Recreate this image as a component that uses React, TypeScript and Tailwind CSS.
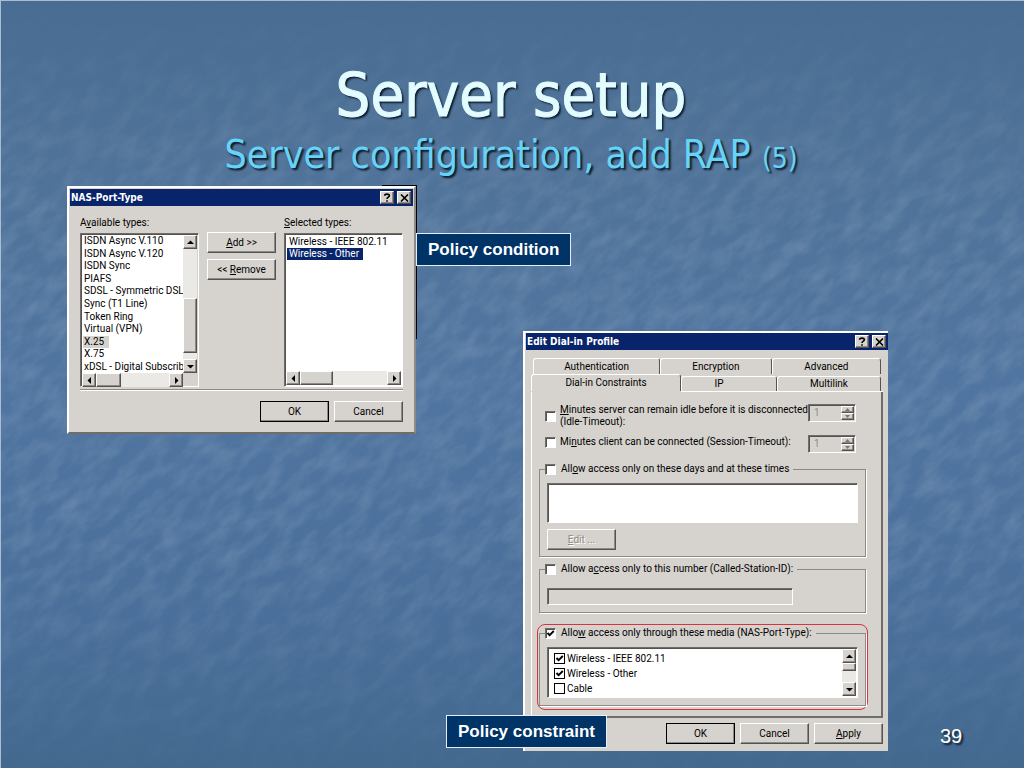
import { useId, type ReactNode } from "react";

const raised =
  "border border-t-white border-l-white border-r-[#55534f] border-b-[#55534f] bg-[#d6d3ce] shadow-[inset_-1px_-1px_0_#8c8a86]";
const sunken =
  "border border-t-[#6f6d69] border-l-[#6f6d69] border-r-white border-b-white shadow-[inset_1px_1px_0_#55534f]";
const track = "bg-[#ebe9e5]";

function Key({ children }: { children: ReactNode }) {
  return <span className="underline underline-offset-1">{children}</span>;
}

function Arrow({ dir }: { dir: "up" | "down" | "left" | "right" }) {
  const points = {
    up: "1,6 4.5,2.5 8,6",
    down: "1,3 4.5,6.5 8,3",
    left: "6,1 2.5,4.5 6,8",
    right: "3,1 6.5,4.5 3,8",
  }[dir];
  return (
    <svg viewBox="0 0 9 9" className="size-[9px]" aria-hidden="true">
      <polygon points={points} fill="#000" />
    </svg>
  );
}

function ScrollButton({ dir }: { dir: "up" | "down" | "left" | "right" }) {
  return (
    <button
      type="button"
      aria-label={"Scroll " + dir}
      className={raised + " flex size-[14px] shrink-0 items-center justify-center"}
    >
      <Arrow dir={dir} />
    </button>
  );
}

function TitleBar({ title }: { title: string }) {
  return (
    <header className="flex h-[17px] items-center gap-[3px] bg-[#08246b] pr-0.5 pl-px">
      <h2 className="flex-1 font-['DejaVu_Sans_Condensed','DejaVu_Sans',sans-serif] text-[10px] leading-4 font-bold whitespace-nowrap text-white">
        {title}
      </h2>
      <button
        type="button"
        aria-label="Help"
        className={raised + " flex h-[13px] w-[14px] items-center justify-center"}
      >
        <svg viewBox="0 0 8 9" className="h-[9px] w-2" aria-hidden="true">
          <path d="M1.6 2.8C1.6 .6 6.4.6 6.4 2.7 6.4 4.2 4 4.1 4 6M4 7.2V8.8" fill="none" stroke="#000" strokeWidth="1.6" />
        </svg>
      </button>
      <button
        type="button"
        aria-label="Close"
        className={raised + " flex h-[13px] w-[14px] items-center justify-center"}
      >
        <svg viewBox="0 0 9 8" className="h-2 w-[9px]" aria-hidden="true">
          <path d="M1 .5 8 7.5M8 .5 1 7.5" stroke="#000" strokeWidth="1.6" />
        </svg>
      </button>
    </header>
  );
}

function PushButton({
  children,
  primary = false,
  disabled = false,
}: {
  children: ReactNode;
  primary?: boolean;
  disabled?: boolean;
}) {
  return (
    <button
      type="button"
      disabled={disabled}
      className={
        raised +
        " h-[21px] w-[69px] whitespace-nowrap" +
        (primary ? " outline -outline-offset-1 outline-black" : "") +
        (disabled ? " text-[#8c8a86] [text-shadow:1px_1px_0_#fff]" : "")
      }
    >
      {children}
    </button>
  );
}

function Check({
  id,
  checked = false,
  flat = false,
}: {
  id: string;
  checked?: boolean;
  flat?: boolean;
}) {
  return (
    <span className="relative size-[11px] shrink-0">
      <input
        id={id}
        type="checkbox"
        defaultChecked={checked}
        className={
          "peer block size-[11px] appearance-none bg-white " +
          (flat ? "border border-black" : sunken)
        }
      />
      <svg
        viewBox="0 0 11 11"
        className="pointer-events-none absolute inset-0 hidden size-[11px] peer-checked:block"
        aria-hidden="true"
      >
        <path d="M2.5 5 4.6 7.2 8.8 3" fill="none" stroke="#000" strokeWidth="1.9" />
      </svg>
    </span>
  );
}

function Spinner({ label }: { label: string }) {
  return (
    <div className={sunken + " flex h-[18px] w-12 shrink-0 p-px"}>
      <input
        aria-label={label}
        defaultValue="1"
        disabled
        className="w-full min-w-0 flex-1 pl-1 text-[#8c8a86]"
      />
      <div className="flex w-[13px] shrink-0 flex-col">
        <button type="button" disabled aria-label="Increase" className={raised + " flex h-[7px] items-center justify-center overflow-hidden"}>
          <svg viewBox="0 0 5 3" className="h-[3px] w-[5px]" aria-hidden="true">
            <path d="M0 3 2.5 0 5 3z" fill="#777" />
          </svg>
        </button>
        <button type="button" disabled aria-label="Decrease" className={raised + " flex h-[7px] items-center justify-center overflow-hidden"}>
          <svg viewBox="0 0 5 3" className="h-[3px] w-[5px]" aria-hidden="true">
            <path d="M0 0 2.5 3 5 0z" fill="#777" />
          </svg>
        </button>
      </div>
    </div>
  );
}

function Group({
  legend,
  checked,
  className,
  children,
}: {
  legend: ReactNode;
  checked?: boolean;
  className: string;
  children: ReactNode;
}) {
  const id = useId();
  return (
    <fieldset
      className={"min-w-0 border border-[#8c8a86] px-[7px] shadow-[1px_1px_0_#fff] " + className}
    >
      <legend className="-ml-0.5 flex h-3 items-center gap-[5px] bg-[#d6d3ce] pr-1">
        <Check id={id} checked={checked} />
        <label htmlFor={id} className="whitespace-nowrap">
          {legend}
        </label>
      </legend>
      {children}
    </fieldset>
  );
}

const available = [
  "ISDN Async V.110",
  "ISDN Async V.120",
  "ISDN Sync",
  "PIAFS",
  "SDSL - Symmetric DSL",
  "Sync (T1 Line)",
  "Token Ring",
  "Virtual (VPN)",
  "X.25",
  "X.75",
  "xDSL - Digital Subscrib",
];

function PortTypeDialog() {
  return (
    <section
      aria-label="NAS-Port-Type"
      className="absolute top-[186px] left-[67px] w-[349px] border-2 border-t-white border-r-[#8c8a86] border-b-[#6f6d69] border-l-white bg-[#d6d3ce] p-px pb-[10px]"
    >
      <TitleBar title="NAS-Port-Type" />
      <div className="px-[10px] pt-[10px]">
        <div className="flex justify-between">
          <div className="w-[119px]">
            <p className="h-[17px] leading-[14px]">
              A<Key>v</Key>ailable types:
            </p>
            <div className={sunken + " h-[154px] bg-[#d6d3ce] p-px"}>
              <div className="flex h-[138px]">
                <div className="min-w-0 flex-1 bg-white">
                  <ul role="listbox" aria-label="Available types" className="grid h-[138px] auto-rows-fr pl-px">
                    {available.map((name) => (
                      <li key={name} role="option" aria-selected={name === "X.25"} className="flex items-center whitespace-nowrap">
                        <span className={name === "X.25" ? "bg-[#d6d3ce] pr-[5px] pl-px leading-3" : "pl-px leading-3"}>{name}</span>
                      </li>
                    ))}
                  </ul>
                </div>
                <div className={track + " flex w-[14px] flex-col"}>
                  <ScrollButton dir="up" />
                  <div className="flex-1" />
                  <div className={raised + " mb-[6px] h-[55px]"} />
                  <ScrollButton dir="down" />
                </div>
              </div>
              <div className="flex h-[14px] pr-[14px]">
                <div className={track + " flex flex-1"}>
                  <ScrollButton dir="left" />
                  <div className={raised + " w-[25px]"} />
                  <div className="flex-1" />
                  <ScrollButton dir="right" />
                </div>
              </div>
            </div>
          </div>
          <div className="flex flex-col gap-[6px] pt-4">
            <PushButton>
              <Key>A</Key>dd &gt;&gt;
            </PushButton>
            <PushButton>
              &lt;&lt; <Key>R</Key>emove
            </PushButton>
          </div>
          <div className="w-[119px]">
            <p className="h-[17px] leading-[14px]">
              <Key>S</Key>elected types:
            </p>
            <div className={sunken + " flex h-[154px] flex-col justify-between bg-white p-px"}>
              <ul role="listbox" aria-label="Selected types" className="pl-px leading-[13px]">
                <li role="option" aria-selected="false" className="pl-0.5">
                  Wireless - IEEE 802.11
                </li>
                <li role="option" aria-selected="true" className="flex">
                  <span className="bg-[#08246b] pr-1 pl-0.5 leading-3 text-white">Wireless - Other</span>
                </li>
              </ul>
              <div className={track + " flex h-[14px]"}>
                <ScrollButton dir="left" />
                <div className={raised + " w-[33px]"} />
                <div className="flex-1" />
                <ScrollButton dir="right" />
              </div>
            </div>
          </div>
        </div>
        <div className="mt-0.5 h-0.5 border-t border-b border-t-[#8c8a86] border-b-white" />
        <div className="mt-[10px] flex justify-end gap-[5px]">
          <PushButton primary>OK</PushButton>
          <PushButton>Cancel</PushButton>
        </div>
      </div>
    </section>
  );
}

function Tab({ children, className, active = false }: { children: ReactNode; className: string; active?: boolean }) {
  return (
    <button
      type="button"
      role="tab"
      aria-selected={active}
      className={
        "rounded-t-[3px] border-t border-l border-t-white border-l-white leading-[14px] " +
        (active ? "" : "border-r border-r-[#55534f] ") +
        className
      }
    >
      {children}
    </button>
  );
}

const media = [
  { name: "Wireless - IEEE 802.11", on: true },
  { name: "Wireless - Other", on: true },
  { name: "Cable", on: false },
];

function ProfileDialog() {
  const idle = useId();
  const session = useId();
  const mediaId = useId();
  return (
    <section
      aria-label="Edit Dial-in Profile"
      className="absolute top-[331px] left-[523px] w-[365px] border-t-2 border-l-2 border-white bg-[#d6d3ce] pb-[7px] pl-px"
    >
      <TitleBar title="Edit Dial-in Profile" />
      <div className="pt-2 pr-[5px] pl-[5px]">
        <div role="tablist">
          <div className="flex h-4 pr-0.5 pl-0.5">
            <Tab className="flex-[127]">Authentication</Tab>
            <Tab className="flex-[111]">Encryption</Tab>
            <Tab className="flex-[109]">Advanced</Tab>
          </div>
          <div className="flex h-[17px] items-end pr-0.5">
            <Tab active className="h-[17px] w-[150px] border-r border-r-[#55534f]">
              Dial-in Constraints
            </Tab>
            <Tab className="h-[15px] w-24 pr-5">IP</Tab>
            <Tab className="h-[15px] flex-1">Multilink</Tab>
          </div>
        </div>
        <div className="flex">
          <div className="w-[150px]" />
          <div className="h-px flex-1 bg-white" />
        </div>
        <div className="border-r-2 border-b-2 border-l border-r-[#6f6d69] border-b-[#6f6d69] border-l-white pt-3 pr-[15px] pb-[6px] pl-[7px]">
          <div className="flex h-[31px] items-start pr-[10px] pl-[6px]">
            <div className="flex min-w-0 flex-1 items-center gap-1">
              <Check id={idle} />
              <label htmlFor={idle} className="leading-3 whitespace-nowrap">
                <Key>M</Key>inutes server can remain idle before it is disconnected
                <br />
                (Idle-Timeout):
              </label>
            </div>
            <Spinner label="Idle timeout minutes" />
          </div>
          <div className="flex h-[28px] items-start pr-[10px] pl-[6px]">
            <div className="flex min-w-0 flex-1 items-center gap-1 pt-px">
              <Check id={session} />
              <label htmlFor={session} className="whitespace-nowrap">
                Mi<Key>n</Key>utes client can be connected (Session-Timeout):
              </label>
            </div>
            <Spinner label="Session timeout minutes" />
          </div>

          <Group
            className="h-[94px]"
            legend={
              <>
                All<Key>o</Key>w access only on these days and at these times
              </>
            }
          >
            <div className={sunken + " mt-2 h-10 bg-white"} />
            <div className="mt-[6px]">
              <PushButton disabled>
                <Key>E</Key>dit ...
              </PushButton>
            </div>
          </Group>

          <Group
            className="mt-[6px] h-[50px]"
            legend={
              <>
                Allow a<Key>c</Key>cess only to this number (Called-Station-ID):
              </>
            }
          >
            <input aria-label="Called station ID" disabled className={sunken + " mt-[13px] block h-[17px] w-[79%]"} />
          </Group>

          <div className="-mx-0.5 mt-[11px] rounded-lg border border-[#d9333f] px-px pt-0.5 pb-[3px]">
            <Group
              className="h-[79px]"
              checked
              legend={
                <>
                  Allo<Key>w</Key> access only through these media (NAS-Port-Type):
                </>
              }
            >
              <div className={sunken + " mt-2 flex h-[51px] bg-white p-px"}>
                <ul className="flex-1 pt-0.5 pl-[5px]">
                  {media.map((m, i) => (
                    <li key={m.name} className="flex h-[15px] items-center gap-0.5">
                      <Check flat id={mediaId + i} checked={m.on} />
                      <label htmlFor={mediaId + i}>{m.name}</label>
                    </li>
                  ))}
                </ul>
                <div className={track + " flex w-[14px] flex-col"}>
                  <ScrollButton dir="up" />
                  <div className={raised + " h-2"} />
                  <div className="flex-1" />
                  <ScrollButton dir="down" />
                </div>
              </div>
            </Group>
          </div>
        </div>
        <div className="mt-[5px] flex justify-end gap-[5px]">
          <PushButton primary>OK</PushButton>
          <PushButton>Cancel</PushButton>
          <PushButton>
            <Key>A</Key>pply
          </PushButton>
        </div>
      </div>
    </section>
  );
}

function Backdrop() {
  return (
    <svg className="absolute inset-0 h-full w-full" aria-hidden="true">
      <defs>
        <linearGradient id="sky" x1="0" y1="0" x2="0" y2="1">
          <stop offset="0" stopColor="#486c92" />
          <stop offset="0.2" stopColor="#4f7298" />
          <stop offset="0.5" stopColor="#5075a0" />
          <stop offset="0.8" stopColor="#4a6f9a" />
          <stop offset="1" stopColor="#43698f" />
        </linearGradient>
        <linearGradient id="fade" x1="0" y1="0" x2="0" y2="1">
          <stop offset="0.02" stopColor="#fff" stopOpacity="0.1" />
          <stop offset="0.3" stopColor="#fff" />
          <stop offset="0.7" stopColor="#fff" />
          <stop offset="1" stopColor="#fff" stopOpacity="0.1" />
        </linearGradient>
        <mask id="band">
          <rect width="100%" height="100%" fill="url(#fade)" />
        </mask>
        <filter id="grain" x="0" y="0" width="100%" height="100%">
          <feTurbulence type="fractalNoise" baseFrequency="0.035 0.075" numOctaves="4" seed="7" />
          <feColorMatrix values="0 0 0 0 0.78  0 0 0 0 0.84  0 0 0 0 0.93  0.9 0 0 0 -0.3" />
        </filter>
      </defs>
      <rect width="100%" height="100%" fill="url(#sky)" />
      <g mask="url(#band)">
        <g transform="rotate(-42 512 384)">
          <rect x="-300" y="-400" width="1700" height="1600" filter="url(#grain)" opacity="0.3" />
        </g>
      </g>
    </svg>
  );
}

const callout =
  "absolute flex h-[33px] items-center border border-[#e6edf5] bg-[#003366] px-[11px] text-[17px] font-bold whitespace-nowrap text-white font-['Liberation_Sans',Arial,sans-serif]";

export default function App() {
  return (
    <main className="relative min-h-screen overflow-hidden bg-[#4b7099] font-[Roboto,'Liberation_Sans',sans-serif] text-[10px] leading-3 text-black">
      <Backdrop />
      <div className="pointer-events-none absolute inset-0 border-t border-l border-[#a9bdd3]" />
      <h1 className="relative pt-[59px] pr-0.5 text-center font-['DejaVu_Sans_Condensed','DejaVu_Sans',sans-serif]">
        <span className="block text-[61px] leading-[72px] text-[#e2fcff] [text-shadow:2px_2px_2px_#0b1a2a] [-webkit-text-stroke:1px_#e2fcff]">
          Server setup
        </span>
        <span className="block text-[39px] leading-[48px] text-[#66d4f8] [text-shadow:2px_2px_2px_#0b1a2a]">
          Server configuration, add RAP <span className="text-[28px]">(5)</span>
        </span>
      </h1>
      <div className="absolute top-[185px] left-[382px] h-[154px] w-[35px] bg-black" />
      <PortTypeDialog />
      <ProfileDialog />
      <p className={callout + " top-[233px] left-[416px]"}>Policy condition</p>
      <p className={callout + " top-[715px] left-[446px]"}>Policy constraint</p>
      <p className="absolute top-[724px] left-[940px] font-['Liberation_Sans',Arial,sans-serif] text-[20px] leading-6 text-white [text-shadow:2px_2px_2px_#0b1a2a]">
        39
      </p>
    </main>
  );
}
